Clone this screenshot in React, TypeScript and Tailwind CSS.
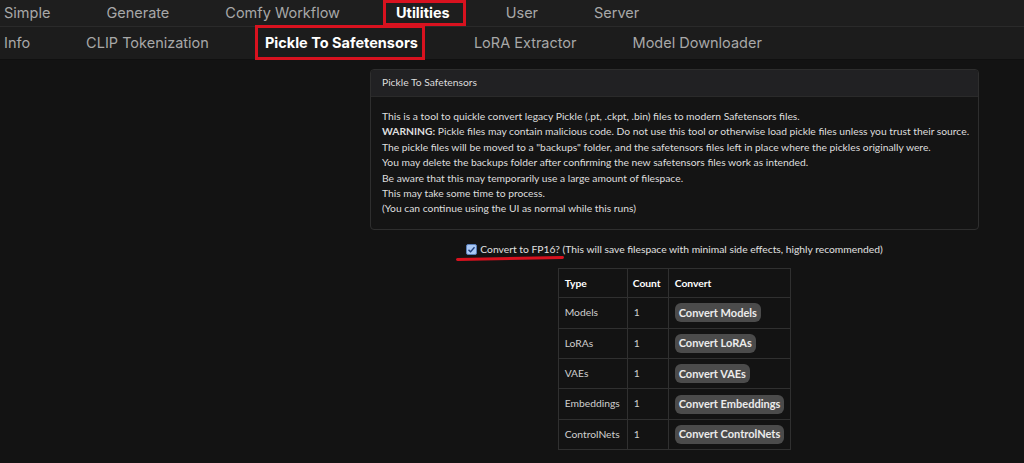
import React, { useState } from 'react';

const topTabs = ['Simple', 'Generate', 'Comfy Workflow', 'Utilities', 'User', 'Server'];
const subTabs = ['Info', 'CLIP Tokenization', 'Pickle To Safetensors', 'LoRA Extractor', 'Model Downloader'];

const rows = [
  { type: 'Models', count: 1, label: 'Convert Models' },
  { type: 'LoRAs', count: 1, label: 'Convert LoRAs' },
  { type: 'VAEs', count: 1, label: 'Convert VAEs' },
  { type: 'Embeddings', count: 1, label: 'Convert Embeddings' },
  { type: 'ControlNets', count: 1, label: 'Convert ControlNets' },
];

function Tab({ label, active, boxClass }: { label: string; active: boolean; boxClass: string }) {
  return (
    <span className={`relative whitespace-nowrap ${active ? 'text-white font-bold' : 'text-[#a8a8a8]'}`}>
      {label}
      {active && <span className={`absolute border-[3px] border-[#d8121f] ${boxClass}`} />}
    </span>
  );
}

export default function App() {
  const [fp16, setFp16] = useState(true);

  return (
    <div className="w-[1024px] h-[463px] overflow-hidden bg-[#131313] font-['Lato',sans-serif] text-[10.3px] text-[#d4d4d4]">
      <div className="h-[27px] bg-[#1e1e1e] flex items-center gap-[56px] pl-1 text-[14.5px] font-['Inter',sans-serif] border-b border-[#2a2a2a]">
        {topTabs.map(t => (
          <Tab key={t} label={t} active={t === 'Utilities'} boxClass="-left-[13px] -right-[16px] -top-[2px] -bottom-[2px]" />
        ))}
      </div>
      <div className="h-[33px] bg-[#1c1c1c] flex items-center gap-[56px] pl-1 text-[14.5px] font-['Inter',sans-serif] border-b border-[#101010]">
        {subTabs.map(t => (
          <Tab key={t} label={t} active={t === 'Pickle To Safetensors'} boxClass="-left-[10px] -right-[7px] -top-[7px] -bottom-[6px]" />
        ))}
      </div>

      <div className="pl-[325px] pt-[9px] flex flex-col items-center">
        <div className="w-[609px] rounded border border-[#2e2e2e] bg-[#141414] overflow-hidden">
          <div className="h-[27px] bg-[#212123] border-b border-[#2a2a2a] flex items-center px-[11px] text-[#dcdcdc]">
            Pickle To Safetensors
          </div>
          <div className="px-[11px] py-[12px] leading-[15.4px] text-[#dedede] whitespace-nowrap">
            <div>This is a tool to quickle convert legacy Pickle (.pt, .ckpt, .bin) files to modern Safetensors files.</div>
            <div><b>WARNING:</b> Pickle files may contain malicious code. Do not use this tool or otherwise load pickle files unless you trust their source.</div>
            <div>The pickle files will be moved to a "backups" folder, and the safetensors files left in place where the pickles originally were.</div>
            <div>You may delete the backups folder after confirming the new safetensors files work as intended.</div>
            <div>Be aware that this may temporarily use a large amount of filespace.</div>
            <div>This may take some time to process.</div>
            <div>(You can continue using the UI as normal while this runs)</div>
          </div>
        </div>

        <label className="relative mt-[12px] flex items-center gap-[3px] cursor-pointer text-[#e0e0e0]" onClick={() => setFp16(!fp16)}>
          <span className={`w-[11px] h-[11px] rounded-[2px] border border-[#5a7fb8] flex items-center justify-center ${fp16 ? 'bg-[#a9c8f5]' : 'bg-white'}`}>
            {fp16 && (
              <svg viewBox="0 0 12 12" className="w-[9px] h-[9px]">
                <path d="M2 6.5 L4.8 9 L10 3" fill="none" stroke="#1f3f7a" strokeWidth="1.8" />
              </svg>
            )}
          </span>
          <span className="whitespace-nowrap">
            Convert to FP16? (This will save filespace with minimal side effects, highly recommended)
          </span>
          <span className="absolute -left-[10px] top-[15px] w-[108px] h-[3px] rounded-full bg-[#d8121f] rotate-[-1deg]" />
        </label>

        <table className="mt-[11px] border-collapse border border-[#303030]">
          <thead>
            <tr className="h-[29px]">
              <th className="w-[69px] text-left font-bold text-white px-[6px] border border-[#303030]">Type</th>
              <th className="w-[41px] text-left font-bold text-white px-[5px] border border-[#303030]">Count</th>
              <th className="w-[122px] text-left font-bold text-white px-[6px] border border-[#303030]">Convert</th>
            </tr>
          </thead>
          <tbody>
            {rows.map(r => (
              <tr key={r.type} className="h-[30.4px]">
                <td className="px-[6px] border border-[#303030] text-[#cfcfcf]">{r.type}</td>
                <td className="px-[6px] border border-[#303030] text-[#cfcfcf]">{r.count}</td>
                <td className="px-[6px] border border-[#303030]">
                  <button className="h-[19px] px-[4px] rounded-[6px] bg-[#4b4b4b] text-[#ececec] text-[11px] font-bold whitespace-nowrap">
                    {r.label}
                  </button>
                </td>
              </tr>
            ))}
          </tbody>
        </table>
      </div>
    </div>
  );
}
